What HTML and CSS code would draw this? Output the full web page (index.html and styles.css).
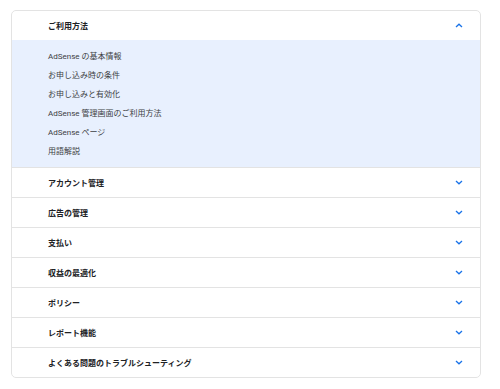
FILE: index.html
```html
<!DOCTYPE html>
<html lang="ja">

<head>
    <meta charset="UTF-8">
    <meta name="viewport" content="width=device-width, initial-scale=1.0">
    <title>AdSense ヘルプ</title>
    <link rel="stylesheet" href="styles.css">
</head>

<body>

    <div class="card">
        <div class="section open">
            <div class="section-head">
                <span class="section-title">ご利用方法</span>
                <svg class="chevron" viewBox="0 0 8 5"><path d="M1 4 L4 1.2 L7 4" /></svg>
            </div>
            <ul class="section-list">
                <li>AdSense の基本情報</li>
                <li>お申し込み時の条件</li>
                <li>お申し込みと有効化</li>
                <li>AdSense 管理画面のご利用方法</li>
                <li>AdSense ページ</li>
                <li>用語解説</li>
            </ul>
        </div>
        <div class="section">
            <div class="section-head">
                <span class="section-title">アカウント管理</span>
                <svg class="chevron" viewBox="0 0 8 5"><path d="M1 1 L4 3.8 L7 1" /></svg>
            </div>
        </div>
        <div class="section">
            <div class="section-head">
                <span class="section-title">広告の管理</span>
                <svg class="chevron" viewBox="0 0 8 5"><path d="M1 1 L4 3.8 L7 1" /></svg>
            </div>
        </div>
        <div class="section">
            <div class="section-head">
                <span class="section-title">支払い</span>
                <svg class="chevron" viewBox="0 0 8 5"><path d="M1 1 L4 3.8 L7 1" /></svg>
            </div>
        </div>
        <div class="section">
            <div class="section-head">
                <span class="section-title">収益の最適化</span>
                <svg class="chevron" viewBox="0 0 8 5"><path d="M1 1 L4 3.8 L7 1" /></svg>
            </div>
        </div>
        <div class="section">
            <div class="section-head">
                <span class="section-title">ポリシー</span>
                <svg class="chevron" viewBox="0 0 8 5"><path d="M1 1 L4 3.8 L7 1" /></svg>
            </div>
        </div>
        <div class="section">
            <div class="section-head">
                <span class="section-title">レポート機能</span>
                <svg class="chevron" viewBox="0 0 8 5"><path d="M1 1 L4 3.8 L7 1" /></svg>
            </div>
        </div>
        <div class="section">
            <div class="section-head">
                <span class="section-title">よくある問題のトラブルシューティング</span>
                <svg class="chevron" viewBox="0 0 8 5"><path d="M1 1 L4 3.8 L7 1" /></svg>
            </div>
        </div>
    </div>

</body>

</html>
```

FILE: styles.css
```css
body {
    font-family: Roboto, "Noto Sans CJK JP", sans-serif;
    background-color: #fff;
    margin: 0;
    padding: 10px 0 0 11px;
}

.card {
    width: 470px;
    box-sizing: border-box;
    border: 1px solid #e3e3e3;
    border-radius: 5px;
    overflow: hidden;
}

.section + .section {
    border-top: 1px solid #e3e3e3;
}

.section-head {
    height: 29px;
    display: flex;
    align-items: center;
    justify-content: space-between;
    padding: 0 17px 0 36px;
}

.section-title {
    font-size: 8px;
    font-weight: bold;
    color: #202124;
}

.chevron {
    width: 8px;
    height: 5px;
    fill: none;
    stroke: #1a73e8;
    stroke-width: 1.3;
}

.section-list {
    list-style: none;
    margin: 0;
    padding: 7px 0 6px 36px;
    background-color: #e8f0fe;
}

.section-list li {
    font-size: 8px;
    line-height: 19px;
    color: #3c4043;
}
```
